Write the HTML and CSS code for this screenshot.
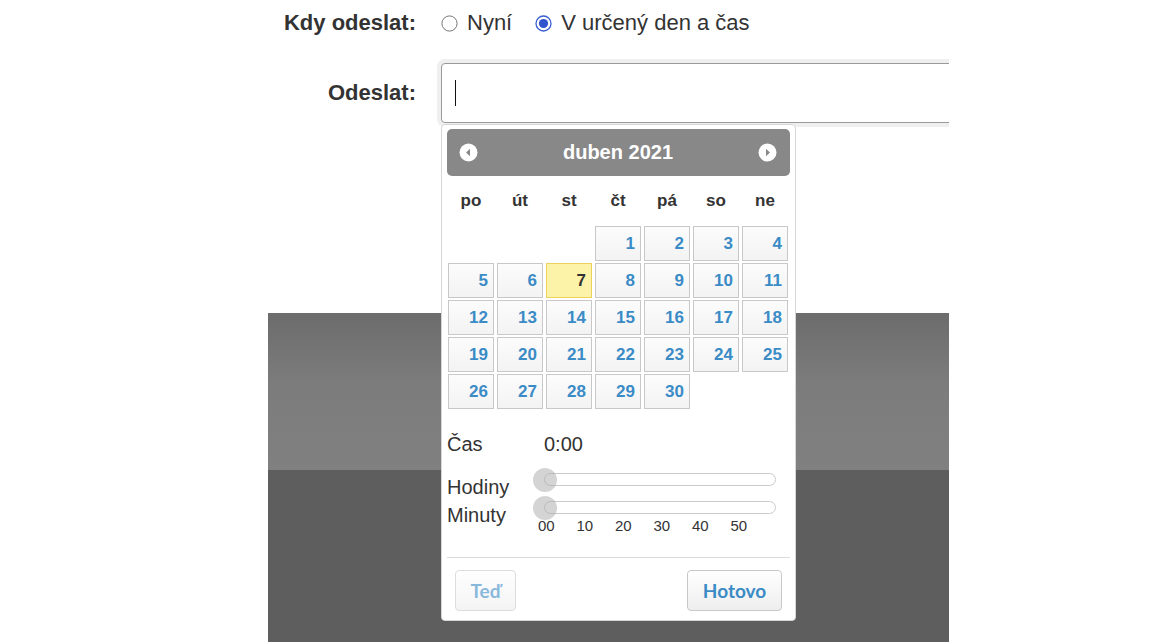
FILE: index.html
```html
<!DOCTYPE html>
<html lang="cs">
<head>
<meta charset="utf-8">
<title>Odeslat</title>
<link rel="stylesheet" href="styles.css">
</head>
<body>
<div class="page">
  <div class="form">
    <div class="row row-when">
      <div class="label">Kdy odeslat:</div>
      <div class="control radios">
        <label class="radio">
          <svg class="radio-icon" width="17" height="17" viewBox="0 0 17 17"><circle cx="8.5" cy="8.5" r="7.6" fill="#fff" stroke="#767676" stroke-width="1"/></svg>
          <span>Nyní</span>
        </label>
        <label class="radio">
          <svg class="radio-icon" width="17" height="17" viewBox="0 0 17 17"><circle cx="8.5" cy="8.5" r="7.5" fill="#fff" stroke="#3b5fd4" stroke-width="1.3"/><circle cx="8.5" cy="8.5" r="4.6" fill="#3153cc"/></svg>
          <span>V určený den a čas</span>
        </label>
      </div>
    </div>
    <div class="row row-send">
      <div class="label">Odeslat:</div>
      <div class="control">
        <div class="input"><span class="caret"></span></div>
      </div>
    </div>
  </div>

  <div class="stage">
    <div class="band"></div>
    <div class="floor"></div>
  </div>

  <div class="picker">
    <div class="header">
      <svg class="nav" width="19" height="19" viewBox="0 0 19 19"><circle cx="9.5" cy="9.5" r="9" fill="#fff"/><polygon points="7,9.5 11,5.8 11,13.2" fill="#888"/></svg>
      <div class="title">duben 2021</div>
      <svg class="nav" width="19" height="19" viewBox="0 0 19 19"><circle cx="9.5" cy="9.5" r="9" fill="#fff"/><polygon points="12,9.5 8,5.8 8,13.2" fill="#888"/></svg>
    </div>
    <div class="weekdays">
      <div>po</div><div>út</div><div>st</div><div>čt</div><div>pá</div><div>so</div><div>ne</div>
    </div>
    <div class="days">
      <div class="day first">1</div><div class="day">2</div><div class="day">3</div><div class="day">4</div>
      <div class="day">5</div><div class="day">6</div><div class="day today">7</div><div class="day">8</div><div class="day">9</div><div class="day">10</div><div class="day">11</div>
      <div class="day">12</div><div class="day">13</div><div class="day">14</div><div class="day">15</div><div class="day">16</div><div class="day">17</div><div class="day">18</div>
      <div class="day">19</div><div class="day">20</div><div class="day">21</div><div class="day">22</div><div class="day">23</div><div class="day">24</div><div class="day">25</div>
      <div class="day">26</div><div class="day">27</div><div class="day">28</div><div class="day">29</div><div class="day">30</div>
    </div>

    <div class="time-row">
      <div class="t-label">Čas</div>
      <div class="t-value">0:00</div>
    </div>
    <div class="slider-row hours">
      <div class="t-label">Hodiny</div>
      <div class="slider-col">
        <div class="track"><span class="handle"></span></div>
      </div>
    </div>
    <div class="slider-row minutes">
      <div class="t-label">Minuty</div>
      <div class="slider-col">
        <div class="track"><span class="handle"></span></div>
        <div class="ticks">
          <span>00</span><span>10</span><span>20</span><span>30</span><span>40</span><span>50</span>
        </div>
      </div>
    </div>

    <div class="buttons">
      <button class="btn btn-now" type="button">Teď</button>
      <button class="btn btn-done" type="button">Hotovo</button>
    </div>
  </div>
</div>
</body>
</html>
```

FILE: styles.css
```css
html, body {
  margin: 0;
  padding: 0;
  background: #fff;
}

body {
  font-family: "Liberation Sans", Arial, sans-serif;
  color: #333;
}

.page {
  position: relative;
  margin-left: 268px;
  width: 681px;
  height: 642px;
  overflow: hidden;
}

.row {
  display: flex;
  align-items: center;
  gap: 25px;
}

.label {
  width: 148px;
  flex: none;
  text-align: right;
  font-weight: bold;
  font-size: 22px;
  color: #333;
}

.row-when {
  height: 46px;
}

.row-send {
  margin-top: 17px;
  height: 60px;
}

.control {
  flex: none;
}

.radios {
  display: flex;
  align-items: center;
  gap: 23px;
  font-size: 22px;
  color: #333;
}

.radio {
  display: flex;
  align-items: center;
  gap: 9px;
}

.radio-icon {
  display: block;
  flex: none;
  margin-top: 1px;
}

.input {
  position: relative;
  width: 540px;
  height: 60px;
  box-sizing: border-box;
  border: 1px solid #9a9a9a;
  border-radius: 4px;
  background: #fff;
  box-shadow: 0 0 0 4px #efefef;
}

.caret {
  position: absolute;
  left: 13px;
  top: 16px;
  width: 1px;
  height: 26px;
  background: #111;
}

.stage {
  margin-top: 190px;
}

.band {
  height: 157px;
  background: linear-gradient(#6c6c6c, #7c7c7c 45%, #808080);
}

.floor {
  height: 172px;
  background: #5e5e5e;
}

/* date picker popup */
.picker {
  position: absolute;
  left: 173px;
  top: 124px;
  width: 355px;
  box-sizing: border-box;
  padding: 4px 5px 9px;
  border: 1px solid #d6d6d6;
  border-radius: 4px;
  background: #fff;
}

.header {
  height: 47px;
  display: flex;
  align-items: center;
  justify-content: space-between;
  padding: 0 13px 0 12px;
  background: #888;
  border-radius: 5px;
}

.nav {
  display: block;
}

.title {
  color: #fff;
  font-weight: bold;
  font-size: 20px;
}

.weekdays {
  display: grid;
  grid-template-columns: repeat(7, 46px);
  column-gap: 3px;
  margin-left: 1px;
  height: 50px;
  align-items: center;
  text-align: center;
  font-weight: bold;
  font-size: 17px;
  color: #333;
}

.days {
  display: grid;
  grid-template-columns: repeat(7, 46px);
  grid-auto-rows: 35px;
  column-gap: 3px;
  row-gap: 2px;
  margin-left: 1px;
}

.day {
  box-sizing: border-box;
  border: 1px solid #c8c8c8;
  background: linear-gradient(#fcfcfc, #f3f3f3);
  display: flex;
  align-items: center;
  justify-content: flex-end;
  padding-right: 5px;
  font-weight: bold;
  font-size: 17px;
  color: #3a8bc6;
}

.day.first {
  grid-column-start: 4;
}

.day.today {
  background: #fcf3a8;
  border-color: #ecd25a;
  color: #333;
}

.time-row {
  display: flex;
  margin-top: 21px;
  height: 28px;
  line-height: 28px;
  font-size: 20px;
  color: #333;
}

.t-label {
  width: 97px;
  flex: none;
  font-size: 20px;
  line-height: 28px;
  color: #333;
}

.slider-row {
  display: flex;
  align-items: flex-start;
}

.slider-row.hours {
  margin-top: 15px;
  height: 28px;
}

.slider-row.minutes {
  height: 33px;
}

.slider-col {
  width: 232px;
  flex: none;
}

.track {
  position: relative;
  height: 13px;
  box-sizing: border-box;
  border: 1px solid #cacaca;
  border-radius: 7px;
  background: #fff;
}

.handle {
  position: absolute;
  left: -12px;
  top: 50%;
  width: 24px;
  height: 24px;
  margin-top: -12px;
  border-radius: 50%;
  background: rgba(170, 170, 170, 0.5);
}

.ticks {
  display: flex;
  margin-top: 4px;
  margin-left: -17px;
  font-size: 15px;
  line-height: 16px;
  color: #333;
}

.ticks span {
  width: 38.5px;
  flex: none;
  text-align: center;
}

.buttons {
  margin-top: 23px;
  border-top: 1px solid #dcdcdc;
  padding: 12px 8px 0;
  display: flex;
  justify-content: space-between;
}

.btn {
  height: 41px;
  box-sizing: border-box;
  border: 1px solid #c8c8c8;
  border-radius: 4px;
  background: linear-gradient(#ffffff, #eeeeee);
  font-family: Lato, "Liberation Sans", sans-serif;
  font-weight: 700;
  font-size: 19px;
  color: #3a8bc6;
  padding: 0;
  margin: 0;
}

.btn-now {
  width: 61px;
  opacity: 0.6;
}

.btn-done {
  width: 95px;
}
```
